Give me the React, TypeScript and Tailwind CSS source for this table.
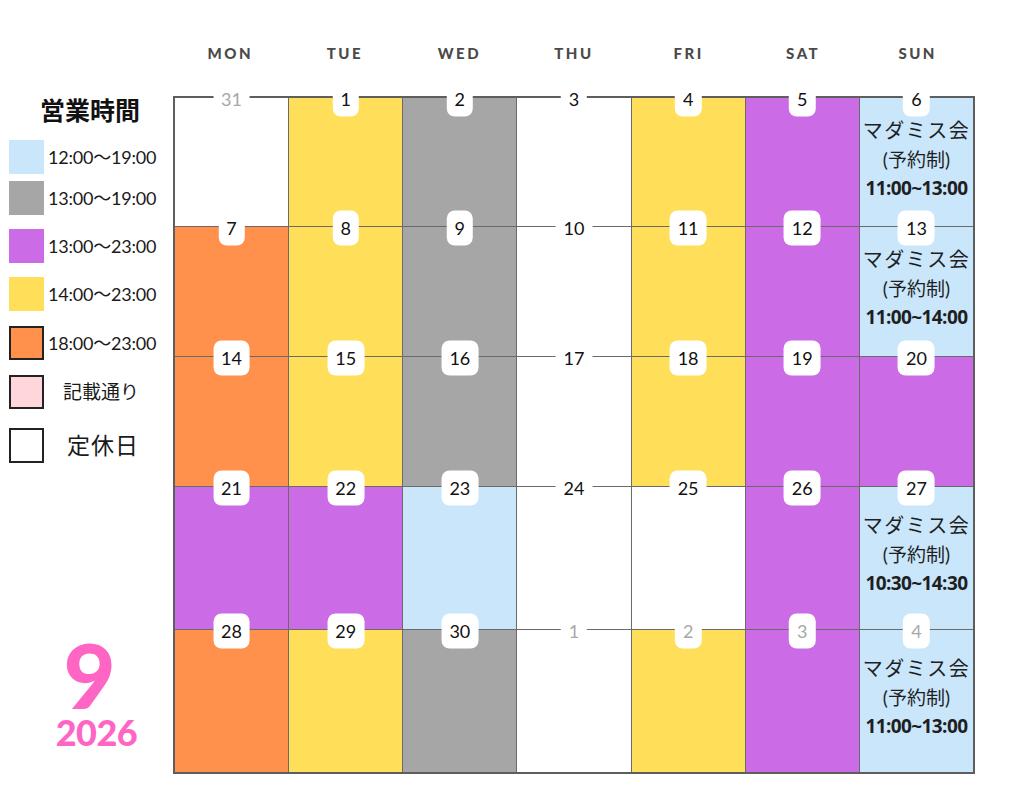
import React from 'react';

type Fill = 'Y' | 'G' | 'P' | 'B' | 'O' | 'W';

interface DayCell {
  day: number;
  fill: Fill;
  muted?: boolean;
  event?: string;
}

const FILL_CLASS: Record<Fill, string> = {
  Y: 'bg-[#ffde59]',
  G: 'bg-[#a6a6a6]',
  P: 'bg-[#cb6ce6]',
  B: 'bg-[#c9e6fb]',
  O: 'bg-[#ff914d]',
  W: 'bg-white',
};

const DAYS = ['MON', 'TUE', 'WED', 'THU', 'FRI', 'SAT', 'SUN'];

const WEEKS: DayCell[][] = [
  [
    { day: 31, fill: 'W', muted: true },
    { day: 1, fill: 'Y' },
    { day: 2, fill: 'G' },
    { day: 3, fill: 'W' },
    { day: 4, fill: 'Y' },
    { day: 5, fill: 'P' },
    { day: 6, fill: 'B', event: '11:00~13:00' },
  ],
  [
    { day: 7, fill: 'O' },
    { day: 8, fill: 'Y' },
    { day: 9, fill: 'G' },
    { day: 10, fill: 'W' },
    { day: 11, fill: 'Y' },
    { day: 12, fill: 'P' },
    { day: 13, fill: 'B', event: '11:00~14:00' },
  ],
  [
    { day: 14, fill: 'O' },
    { day: 15, fill: 'Y' },
    { day: 16, fill: 'G' },
    { day: 17, fill: 'W' },
    { day: 18, fill: 'Y' },
    { day: 19, fill: 'P' },
    { day: 20, fill: 'P' },
  ],
  [
    { day: 21, fill: 'P' },
    { day: 22, fill: 'P' },
    { day: 23, fill: 'B' },
    { day: 24, fill: 'W' },
    { day: 25, fill: 'W' },
    { day: 26, fill: 'P' },
    { day: 27, fill: 'B', event: '10:30~14:30' },
  ],
  [
    { day: 28, fill: 'O' },
    { day: 29, fill: 'Y' },
    { day: 30, fill: 'G' },
    { day: 1, fill: 'W', muted: true },
    { day: 2, fill: 'Y', muted: true },
    { day: 3, fill: 'P', muted: true },
    { day: 4, fill: 'B', muted: true, event: '11:00~13:00' },
  ],
];

const FONT = { fontFamily: 'Lato, "Noto Sans CJK JP", sans-serif' };

const Legend: React.FC = () => {
  const times = [
    { label: '12:00～19:00', swatch: 'bg-[#c9e6fb]', mt: 'mt-[14px]' },
    { label: '13:00～19:00', swatch: 'bg-[#a6a6a6]', mt: 'mt-[7px]' },
    { label: '13:00～23:00', swatch: 'bg-[#cb6ce6]', mt: 'mt-[14px]' },
    { label: '14:00～23:00', swatch: 'bg-[#ffde59]', mt: 'mt-[14px]' },
    { label: '18:00～23:00', swatch: 'bg-[#ff914d] border-2 border-[#222]', mt: 'mt-[15px]' },
  ];

  return (
    <div className="flex-1 flex flex-col">
      <h2 className="pt-[94px] pl-[40px] text-[25px] leading-[32px] font-bold text-[#111]">営業時間</h2>
      {times.map((t, i) => (
        <div key={i} className={`flex items-center h-[34px] ${t.mt}`}>
          <div className={`ml-[9px] w-[35px] h-[34px] ${t.swatch}`}></div>
          <span className="ml-[4px] text-[18px] text-[#1a1a1a] tracking-[-0.2px]">{t.label}</span>
        </div>
      ))}
      <div className="flex items-center h-[34px] mt-[15px]">
        <div className="ml-[9px] w-[35px] h-[34px] bg-[#ffd6dc] border-2 border-[#222]"></div>
        <span className="ml-[19px] text-[19px] text-[#1a1a1a]">記載通り</span>
      </div>
      <div className="flex items-center h-[35px] mt-[19px]">
        <div className="ml-[9px] w-[35px] h-[35px] bg-white border-2 border-[#222]"></div>
        <span className="ml-[23px] text-[23px] text-[#1a1a1a] tracking-[1px]">定休日</span>
      </div>

      {/* 月・年 */}
      <div className="mt-auto pb-[44px] flex flex-col items-center gap-[8px] pl-[20px] text-[#ff66c4] font-black">
        <span className="pr-[14px] text-[90px] leading-[70px]">9</span>
        <span className="text-[36px] leading-[30px] tracking-[-0.5px]">2026</span>
      </div>
    </div>
  );
};

const Cell: React.FC<{ cell: DayCell; row: number }> = ({ cell, row }) => (
  <div className={`relative ${FILL_CLASS[cell.fill]}`}>
    <div
      className={`absolute left-1/2 top-[1px] -translate-x-1/2 -translate-y-1/2 z-10 h-[35px] min-w-[26px] px-[8px] rounded-[8px] bg-white flex items-center justify-center text-[18px] ${
        cell.muted ? 'text-[#a8a8a8]' : 'text-[#111]'
      }`}
    >
      {cell.day}
    </div>
    {cell.event && (
      <div className={`flex flex-col items-center text-[#1f1f1f] ${row < 2 ? 'pt-[18px]' : 'pt-[24px]'}`}>
        <span className="text-[20px] leading-[29px] tracking-[1.5px]">マダミス会</span>
        <span className="text-[19px] leading-[29px]">(予約制)</span>
        <span className="text-[19px] leading-[29px] font-bold tracking-[-0.6px]" style={{ fontFamily: '"Open Sans", sans-serif' }}>
          {cell.event}
        </span>
      </div>
    )}
  </div>
);

const App: React.FC = () => {
  return (
    <div className="w-[1024px] h-[791px] bg-white flex overflow-hidden" style={FONT}>
      <aside className="w-[173px] shrink-0 flex flex-col">
        <Legend />
      </aside>

      <main className="w-[802px] flex flex-col">
        <div className="h-[96px] grid grid-cols-7 pt-[44px]">
          {DAYS.map((d) => (
            <span key={d} className="text-center text-[15px] leading-[18px] font-black tracking-[2.5px] text-[#4a4a4a]">
              {d}
            </span>
          ))}
        </div>

        <div className="grid grid-cols-7 grid-rows-[128px_129px_129px_142px_142px] gap-px bg-[#6a6a6a] border-2 border-[#5e5e5e]">
          {WEEKS.map((week, r) =>
            week.map((cell, c) => <Cell key={`${r}-${c}`} cell={cell} row={r} />)
          )}
        </div>
      </main>
    </div>
  );
};

export default App;
